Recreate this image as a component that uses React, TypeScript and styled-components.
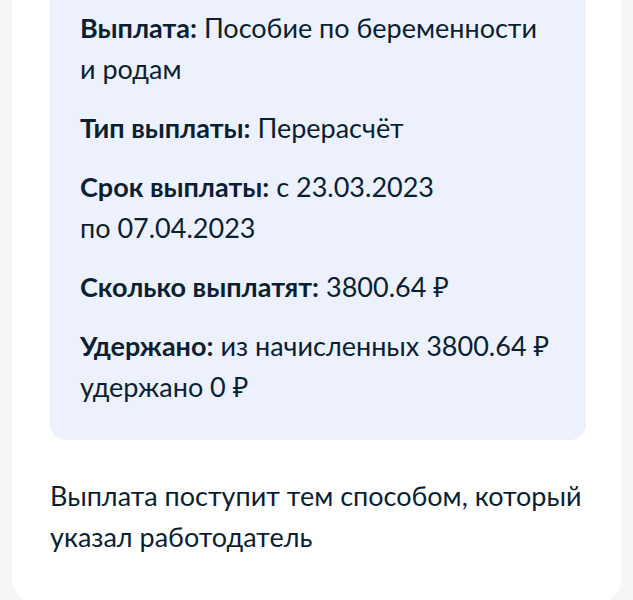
import React from "react";
import styled, { createGlobalStyle } from "styled-components";

const GlobalStyle = createGlobalStyle`
  html, body {
    margin: 0;
    padding: 0;
    background: #f5f6f8;
    overflow: hidden;
  }
  body {
    font-family: Lato, "Noto Sans", "Liberation Sans", sans-serif;
    color: #0b1f33;
  }
`;

const Page = styled.div`
  padding: 0 12px;
  height: 600px;
  overflow: hidden;
`;

const Sheet = styled.div`
  background: #ffffff;
  border-radius: 0 0 24px 24px;
  padding: 0 35px 46px 38px;
  margin-top: -23px;
`;

const InfoCard = styled.div`
  background: #edf1fd;
  border-radius: 16px;
  padding: 30px 34px 33px 30px;
  display: flex;
  flex-direction: column;
  gap: 18px;
`;

const Row = styled.p`
  margin: 0;
  font-size: 27px;
  line-height: 41px;
  font-weight: 400;
`;

const Label = styled.b`
  font-weight: 700;
`;

const Note = styled.p`
  margin: 35px 0 0;
  font-size: 27px;
  line-height: 41px;
`;

const items: { label: string; value: React.ReactNode }[] = [
  { label: "Выплата:", value: "Пособие по беременности и родам" },
  { label: "Тип выплаты:", value: "Перерасчёт" },
  {
    label: "Срок выплаты:",
    value: (
      <>
        с 23.03.2023
        <br />
        по 07.04.2023
      </>
    ),
  },
  { label: "Сколько выплатят:", value: "3800.64 ₽" },
  { label: "Удержано:", value: "из начисленных 3800.64 ₽ удержано 0 ₽" },
];

export default function App() {
  return (
    <>
      <GlobalStyle />
      <Page>
        <Sheet>
          <InfoCard>
            {items.map((it) => (
              <Row key={it.label}>
                <Label>{it.label}</Label> {it.value}
              </Row>
            ))}
          </InfoCard>
          <Note>Выплата поступит тем способом, который указал работодатель</Note>
        </Sheet>
      </Page>
    </>
  );
}
